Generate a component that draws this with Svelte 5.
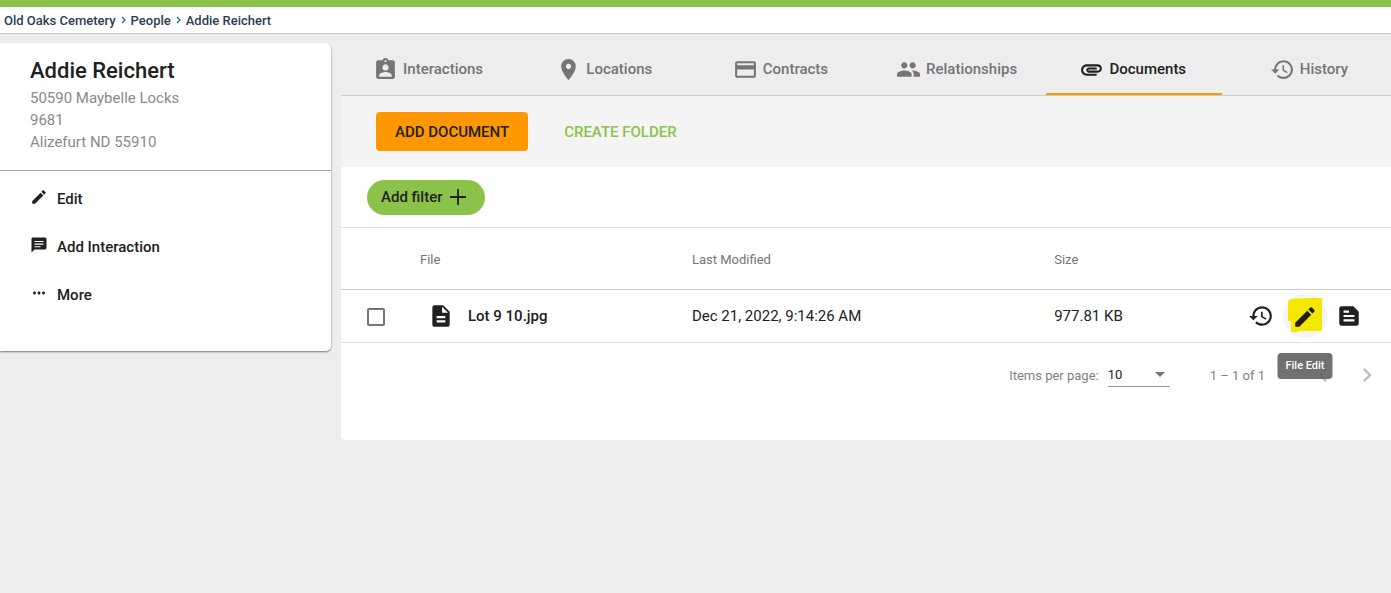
<script>
  let selected = $state(false);
  let pageSize = $state('10');
  let activeTab = $state('Documents');

  const crumbs = ['Old Oaks Cemetery', 'People', 'Addie Reichert'];

  const icons = {
    edit: 'M3 17.25V21h3.75L17.81 9.94l-3.75-3.75L3 17.25zM20.71 7.04c.39-.39.39-1.02 0-1.41l-2.34-2.34c-.39-.39-1.02-.39-1.41 0l-1.83 1.83 3.75 3.75 1.83-1.83z',
    chat: 'M20 2H4c-1.1 0-2 .9-2 2v18l4-4h14c1.1 0 2-.9 2-2V4c0-1.1-.9-2-2-2zM6 6.500h12v1.500H6V6.500zm0 3.500h12v1.500H6V10zm0 3.500h8v1.500H6V13.500z',
    more: 'M6 10c-1.100 0-2 .9-2 2s.9 2 2 2 2-.9 2-2-.9-2-2-2zm12 0c-1.100 0-2 .9-2 2s.9 2 2 2 2-.9 2-2-.9-2-2-2zm-6 0c-1.100 0-2 .9-2 2s.9 2 2 2 2-.9 2-2-.9-2-2-2z',
    assignment: 'M19 3h-4.180C14.400 1.840 13.300 1 12 1c-1.300 0-2.400.84-2.820 2H5c-1.100 0-2 .9-2 2v14c0 1.100.9 2 2 2h14c1.100 0 2-.9 2-2V5c0-1.100-.9-2-2-2zm-7 0c.55 0 1 .45 1 1s-.45 1-1 1-1-.45-1-1 .45-1 1-1zm0 4c1.660 0 3 1.340 3 3s-1.340 3-3 3-3-1.340-3-3 1.340-3 3-3zm6 12H6v-1.400c0-2 4-3.100 6-3.100s6 1.100 6 3.100V19z',
    place: 'M12 2C8.130 2 5 5.130 5 9c0 5.250 7 13 7 13s7-7.750 7-13c0-3.870-3.130-7-7-7zm0 9.500c-1.380 0-2.500-1.120-2.500-2.500s1.120-2.500 2.500-2.500 2.500 1.120 2.500 2.500-1.120 2.500-2.500 2.500z',
    card: 'M20 4H4c-1.110 0-1.990.89-1.990 2L2 18c0 1.110.89 2 2 2h16c1.110 0 2-.89 2-2V6c0-1.110-.89-2-2-2zm0 14H4v-6h16v6zm0-10H4V6h16v2z',
    people: 'M16 11c1.660 0 2.990-1.340 2.990-3S17.660 5 16 5c-1.660 0-3 1.340-3 3s1.340 3 3 3zm-8 0c1.660 0 2.990-1.340 2.990-3S9.660 5 8 5C6.340 5 5 6.340 5 8s1.340 3 3 3zm0 2c-2.330 0-7 1.170-7 3.500V19h14v-2.500c0-2.330-4.670-3.500-7-3.500zm8 0c-.29 0-.62.02-.97.05 1.160.84 1.970 1.970 1.970 3.450V19h6v-2.500c0-2.330-4.670-3.500-7-3.500z',
    attachment: 'M2 12.500C2 9.460 4.460 7 7.500 7H18c2.210 0 4 1.790 4 4s-1.790 4-4 4H9.500C8.120 15 7 13.880 7 12.500S8.120 10 9.500 10H17v2H9.410c-.55 0-.55 1 0 1H18c1.100 0 2-.9 2-2s-.9-2-2-2H7.500C5.570 9 4 10.570 4 12.500S5.570 16 7.500 16H17v2H7.500C4.460 18 2 15.540 2 12.500z',
    history: 'M13 3c-4.970 0-9 4.030-9 9H1l3.890 3.890.07.14L9 12H6c0-3.870 3.130-7 7-7s7 3.130 7 7-3.130 7-7 7c-1.930 0-3.680-.79-4.940-2.060l-1.420 1.420C8.270 19.990 10.510 21 13 21c4.970 0 9-4.030 9-9s-4.030-9-9-9zm-1 5v5l4.280 2.540.72-1.210-3.500-2.080V8H12z',
    file: 'M14 2H6c-1.100 0-1.990.9-1.990 2L4 20c0 1.100.89 2 1.990 2H18c1.100 0 2-.9 2-2V8l-6-6zm2 16H8v-2h8v2zm0-4H8v-2h8v2zm-3-5V3.500L18.500 9H13z',
    note: 'M16 3H5c-1.100 0-2 .9-2 2v14c0 1.100.9 2 2 2h14c1.100 0 2-.9 2-2V8l-5-5zM7 7h5v2H7V7zm10 10H7v-2h10v2zm0-4H7v-2h10v2z',
    prev: 'M15.410 7.410L14 6l-6 6 6 6 1.410-1.410L10.830 12z',
    next: 'M10 6L8.590 7.410 13.170 12l-4.580 4.590L10 18l6-6z'
  };

  const tabs = [
    { label: 'Interactions', icon: 'assignment' },
    { label: 'Locations', icon: 'place' },
    { label: 'Contracts', icon: 'card' },
    { label: 'Relationships', icon: 'people' },
    { label: 'Documents', icon: 'attachment' },
    { label: 'History', icon: 'history' }
  ];

  const actions = [
    { label: 'Edit', icon: 'edit' },
    { label: 'Add Interaction', icon: 'chat' },
    { label: 'More', icon: 'more' }
  ];
</script>

{#snippet icon(name, size = 24)}
  <svg class="icon" width={size} height={size} viewBox="0 0 24 24" aria-hidden="true">
    <path d={icons[name]} />
  </svg>
{/snippet}

<div class="page">
  <nav class="breadcrumbs" aria-label="Breadcrumb">
    {#each crumbs as crumb, i}
      {#if i > 0}
        <svg width="5" height="8" viewBox="0 0 5 8" aria-hidden="true">
          <path d="M1 1l3 3-3 3" fill="none" stroke="#1f6f8b" stroke-width="1.3" />
        </svg>
      {/if}
      <a href="#top">{crumb}</a>
    {/each}
  </nav>

  <div class="layout">
    <aside class="person">
      <div class="person-info">
        <h1>Addie Reichert</h1>
        <p>50590 Maybelle Locks</p>
        <p>9681</p>
        <p>Alizefurt ND 55910</p>
      </div>
      <div class="person-actions">
        {#each actions as action}
          <button class="person-action">
            {@render icon(action.icon, 18)}
            <span>{action.label}</span>
          </button>
        {/each}
      </div>
    </aside>

    <main>
      <div class="tabs" role="tablist">
        {#each tabs as tab}
          <button
            class="tab"
            class:active={activeTab === tab.label}
            role="tab"
            aria-selected={activeTab === tab.label}
            onclick={() => (activeTab = tab.label)}
          >
            {@render icon(tab.icon, 25)}
            <span>{tab.label}</span>
          </button>
        {/each}
      </div>

      <div class="panel">
        <div class="toolbar">
          <button class="add-document">ADD DOCUMENT</button>
          <button class="create-folder">CREATE FOLDER</button>
        </div>

        <div class="filters">
          <button class="add-filter">
            <span>Add filter</span>
            <svg width="16" height="16" viewBox="0 0 16 16" aria-hidden="true">
              <path d="M8 0v16M0 8h16" stroke="currentColor" stroke-width="1.800" />
            </svg>
          </button>
        </div>

        <table>
          <colgroup>
            <col class="col-select" />
            <col class="col-file" />
            <col class="col-modified" />
            <col class="col-size" />
            <col class="col-actions" />
          </colgroup>
          <thead>
            <tr>
              <th></th>
              <th>File</th>
              <th>Last Modified</th>
              <th>Size</th>
              <th></th>
            </tr>
          </thead>
          <tbody>
            <tr>
              <td class="select-cell">
                <input type="checkbox" aria-label="Select Lot 9 10.jpg" bind:checked={selected} />
              </td>
              <td>
                <div class="file-name">
                  {@render icon('file', 26)}
                  <a href="#file">Lot 9 10.jpg</a>
                </div>
              </td>
              <td>Dec 21, 2022, 9:14:26 AM</td>
              <td>977.81 KB</td>
              <td>
                <div class="row-actions">
                  <button aria-label="File History">{@render icon('history', 26)}</button>
                  <button class="edit" aria-label="File Edit">
                    <svg width="44" height="44" viewBox="0 0 44 44" aria-hidden="true">
                      <circle cx="22" cy="22" r="22" fill="#f4f4f4" />
                      <path d="M5 8Q5 6 8 5Q16 4 25 4H39V35Q39 37 37 37H16Q14 38 13 38L8 38V27H5Z" fill="#f5e800" />
                      <path transform="translate(9 10) scale(1.08)" d={icons.edit} fill="#211f04" />
                    </svg>
                    <span class="tooltip" role="tooltip">File Edit</span>
                  </button>
                  <button aria-label="File Details">{@render icon('note', 26)}</button>
                </div>
              </td>
            </tr>
          </tbody>
        </table>

        <div class="paginator">
          <label for="page-size">Items per page:</label>
          <div class="page-size">
            <select id="page-size" bind:value={pageSize}>
              <option>10</option>
              <option>25</option>
              <option>50</option>
            </select>
            <svg width="10" height="5" viewBox="0 0 10 5" aria-hidden="true">
              <path d="M0 0h10L5 5z" />
            </svg>
          </div>
          <span class="range">1 – 1 of 1</span>
          <button aria-label="Previous page" disabled>{@render icon('prev', 28)}</button>
          <button aria-label="Next page" disabled>{@render icon('next', 28)}</button>
        </div>
      </div>
    </main>
  </div>
</div>

<style>
  :global(body) {
    background: #ededed;
  }

  .page {
    font-family: Roboto, sans-serif;
    font-size: 15px;
    color: #212121;
    border-top: 7px solid #8bc34a;
    overflow: hidden;
  }

  button {
    font: inherit;
    color: inherit;
    background: none;
    border: 0;
    padding: 0;
    cursor: pointer;
  }

  a {
    color: inherit;
    text-decoration: none;
  }

  .icon {
    display: block;
    flex: none;
    fill: currentColor;
  }

  .breadcrumbs {
    display: flex;
    align-items: center;
    gap: 5px;
    height: 26px;
    padding-left: 4px;
    background: #fff;
    border-bottom: 1px solid #ccc;
    font-size: 13px;
    font-weight: 500;
    color: #2c3e50;
  }

  .layout {
    display: flex;
    align-items: flex-start;
    gap: 10px;
  }

  .person {
    flex: none;
    width: 331px;
    margin-top: 9px;
    background: #fff;
    border-radius: 0 5px 5px 0;
    box-shadow: 0 1px 2px rgba(0, 0, 0, 0.5);
  }

  .person-info {
    padding: 14px 30px 17px;
    border-bottom: 1px solid #a5a5a5;
  }

  h1 {
    margin: 0 0 3px;
    font-size: 22px;
    line-height: 27px;
    font-weight: 480;
  }

  .person-info p {
    margin: 0;
    line-height: 22px;
    color: #8a8a8a;
  }

  .person-actions {
    display: flex;
    flex-direction: column;
    padding: 4px 30px 32px;
  }

  .person-action {
    display: flex;
    align-items: center;
    gap: 9px;
    height: 48px;
    font-weight: 480;
  }

  .person-action .icon {
    margin-bottom: 4px;
  }

  main {
    flex: 1;
    min-width: 0;
  }

  .tabs {
    display: flex;
    margin-right: -7px;
    border-bottom: 1px solid #ccc;
  }

  .tab {
    flex: 1;
    display: flex;
    align-items: center;
    justify-content: center;
    gap: 5px;
    height: 61px;
    padding: 11px 2px 0 0;
    box-sizing: border-box;
    font-weight: 480;
    color: #757575;
    border-bottom: 2px solid transparent;
  }

  .tab.active {
    color: #212121;
    border-bottom-color: #ff9800;
  }

  .panel {
    background: #fff;
    border-radius: 0 0 0 4px;
  }

  .toolbar {
    display: flex;
    align-items: center;
    gap: 36px;
    padding: 16px 35px;
    background: #f4f4f4;
    font-weight: 500;
  }

  .add-document {
    height: 39px;
    padding: 0 19px;
    background: #ff9800;
    border-radius: 4px;
    font-weight: 480;
  }

  .create-folder {
    color: #8bc34a;
  }

  .filters {
    padding: 13px 26px 12px;
    border-bottom: 1px solid #e0e0e0;
  }

  .add-filter {
    display: flex;
    align-items: center;
    gap: 7px;
    height: 35px;
    padding: 0 19px 2px 14px;
    border-radius: 18px;
    background: #8bc34a;
    font-weight: 480;
  }

  table {
    width: 100%;
    table-layout: fixed;
    border-collapse: collapse;
  }

  .col-select {
    width: 79px;
  }

  .col-file {
    width: 25.9%;
  }

  .col-modified {
    width: 34.5%;
  }

  .col-size {
    width: 15%;
  }

  th,
  td {
    padding: 0;
    text-align: left;
    vertical-align: middle;
  }

  th {
    height: 59px;
    padding-top: 2px;
    font-size: 13px;
    font-weight: 450;
    color: #757575;
    border-bottom: 1px solid #ccc;
  }

  td {
    height: 52px;
    border-bottom: 1px solid #e0e0e0;
  }

  input {
    display: block;
    appearance: none;
    width: 18px;
    height: 18px;
    margin: 1px 0 0 26px;
    border: 2px solid #757575;
    border-radius: 2px;
  }

  input:checked {
    background: #ff9800;
  }

  .file-name {
    display: flex;
    align-items: center;
    gap: 14px;
    padding-left: 8px;
    font-weight: 500;
  }

  .row-actions {
    display: flex;
    justify-content: flex-end;
    padding-right: 20px;
  }

  .row-actions button {
    position: relative;
    display: flex;
    align-items: center;
    justify-content: center;
    width: 44px;
    height: 44px;
  }

  .tooltip {
    position: absolute;
    top: 59px;
    left: 50%;
    transform: translateX(-50%);
    padding: 0 8px;
    border-radius: 4px;
    background: rgba(97, 97, 97, 0.9);
    color: #fff;
    font-size: 11px;
    font-weight: 500;
    line-height: 26px;
    white-space: nowrap;
  }

  .paginator {
    display: flex;
    align-items: center;
    justify-content: flex-end;
    height: 64px;
    padding: 0 10px 33px 0;
    font-size: 13px;
    color: #808080;
  }

  .page-size {
    display: flex;
    align-items: center;
    width: 62px;
    height: 24px;
    margin: 0 40px 0 9px;
    box-sizing: border-box;
    border-bottom: 1px solid #949494;
    position: relative;
  }

  .page-size svg {
    position: absolute;
    right: 5px;
    fill: #757575;
    pointer-events: none;
  }

  select {
    appearance: none;
    width: 100%;
    padding: 0;
    border: 0;
    background: none;
    font: inherit;
    color: #212121;
  }

  .range {
    margin-right: 44px;
  }

  .paginator button {
    color: #bdbdbd;
  }

  .paginator button + button {
    margin-left: 16px;
  }
</style>
